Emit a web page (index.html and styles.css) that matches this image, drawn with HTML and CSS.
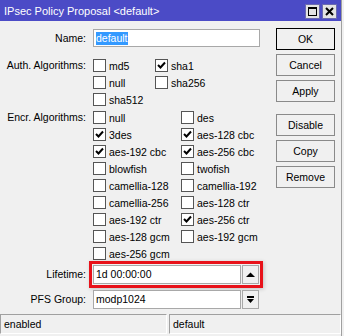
FILE: index.html
```html
<!DOCTYPE html>
<html>
<head>
<meta charset="utf-8">
<link rel="stylesheet" href="styles.css">
</head>
<body>
<div class="window">
  <div class="titlebar">
    <span class="title">IPsec Policy Proposal &lt;default&gt;</span>
    <div class="tb-btns">
      <span class="tb-btn"><svg width="13" height="13" viewBox="0 0 13 13"><rect x="2.5" y="2.5" width="8" height="8" fill="none" stroke="#000" stroke-width="1"/><rect x="2" y="2" width="9" height="2" fill="#000"/></svg></span>
      <span class="tb-btn"><svg width="13" height="13" viewBox="0 0 13 13"><path d="M3 3 L10 10 M10 3 L3 10" stroke="#000" stroke-width="2"/></svg></span>
    </div>
  </div>
  <div class="main">
    <div class="form">
      <div class="row row-name">
        <div class="label">Name:</div>
        <div class="input name-input"><span class="sel">default</span></div>
      </div>
      <div class="row row-auth">
        <div class="label">Auth. Algorithms:</div>
        <div class="checks auth">
          <label class="cb"><span class="box"></span>md5</label>
          <label class="cb"><span class="box on"><svg width="9" height="9" viewBox="0 0 9 9"><path d="M1 4 L3.5 6.5 L8 1.5" fill="none" stroke="#000" stroke-width="2"/></svg></span>sha1</label>
          <label class="cb"><span class="box"></span>null</label>
          <label class="cb"><span class="box"></span>sha256</label>
          <label class="cb"><span class="box"></span>sha512</label>
        </div>
      </div>
      <div class="row row-encr">
        <div class="label">Encr. Algorithms:</div>
        <div class="checks encr">
          <label class="cb"><span class="box"></span>null</label>
          <label class="cb"><span class="box"></span>des</label>
          <label class="cb"><span class="box on"><svg width="9" height="9" viewBox="0 0 9 9"><path d="M1 4 L3.5 6.5 L8 1.5" fill="none" stroke="#000" stroke-width="2"/></svg></span>3des</label>
          <label class="cb"><span class="box on"><svg width="9" height="9" viewBox="0 0 9 9"><path d="M1 4 L3.5 6.5 L8 1.5" fill="none" stroke="#000" stroke-width="2"/></svg></span>aes-128 cbc</label>
          <label class="cb"><span class="box on"><svg width="9" height="9" viewBox="0 0 9 9"><path d="M1 4 L3.5 6.5 L8 1.5" fill="none" stroke="#000" stroke-width="2"/></svg></span>aes-192 cbc</label>
          <label class="cb"><span class="box on"><svg width="9" height="9" viewBox="0 0 9 9"><path d="M1 4 L3.5 6.5 L8 1.5" fill="none" stroke="#000" stroke-width="2"/></svg></span>aes-256 cbc</label>
          <label class="cb"><span class="box"></span>blowfish</label>
          <label class="cb"><span class="box"></span>twofish</label>
          <label class="cb"><span class="box"></span>camellia-128</label>
          <label class="cb"><span class="box"></span>camellia-192</label>
          <label class="cb"><span class="box"></span>camellia-256</label>
          <label class="cb"><span class="box"></span>aes-128 ctr</label>
          <label class="cb"><span class="box"></span>aes-192 ctr</label>
          <label class="cb"><span class="box on"><svg width="9" height="9" viewBox="0 0 9 9"><path d="M1 4 L3.5 6.5 L8 1.5" fill="none" stroke="#000" stroke-width="2"/></svg></span>aes-256 ctr</label>
          <label class="cb"><span class="box"></span>aes-128 gcm</label>
          <label class="cb"><span class="box"></span>aes-192 gcm</label>
          <label class="cb"><span class="box"></span>aes-256 gcm</label>
        </div>
      </div>
      <div class="row row-life">
        <div class="label">Lifetime:</div>
        <div class="field highlight">
          <div class="input">1d 00:00:00</div>
          <div class="sq-btn"><svg width="9" height="6" viewBox="0 0 9 6"><path d="M0 5 L4.5 0.5 L9 5 Z" fill="#000"/></svg></div>
        </div>
      </div>
      <div class="row row-pfs">
        <div class="label">PFS Group:</div>
        <div class="field">
          <div class="input">modp1024</div>
          <div class="sq-btn"><svg width="9" height="8" viewBox="0 0 9 8"><rect x="1" y="0" width="7" height="2" fill="#000"/><path d="M1 3 L8 3 L4.5 7 Z" fill="#000"/></svg></div>
        </div>
      </div>
    </div>
    <div class="buttons">
      <div class="btn default">OK</div>
      <div class="btn">Cancel</div>
      <div class="btn">Apply</div>
      <div class="btn group">Disable</div>
      <div class="btn">Copy</div>
      <div class="btn">Remove</div>
    </div>
  </div>
  <div class="status">
    <div class="cell c1">enabled</div>
    <div class="cell c2">default</div>
  </div>
</div>
</body>
</html>
```
FILE: styles.css
```css
html, body {
  margin: 0;
  padding: 0;
  background: #f0f0f0;
}
body {
  width: 344px;
  height: 336px;
  overflow: hidden;
  font-family: "Liberation Sans", Arial, sans-serif;
  font-size: 10.5px;
  color: #000;
}
.window {
  width: 341px;
  height: 336px;
  border-right: 1px solid #a0a0a0;
  display: flex;
  flex-direction: column;
}
.titlebar {
  height: 21px;
  background: #4b4bc6;
  display: flex;
  align-items: center;
  justify-content: space-between;
  padding: 0 4px 0 4px;
}
.title {
  color: #fff;
  font-size: 11px;
}
.tb-btns {
  display: flex;
  gap: 2px;
  padding-top: 1px;
}
.tb-btn {
  width: 15px;
  height: 15px;
  box-sizing: border-box;
  background: #e3e3e3;
  border: 1px solid #6a6ab0;
  display: flex;
  align-items: center;
  justify-content: center;
}
.main {
  display: flex;
}
.form {
  width: 270px;
  padding-top: 8px;
}
.row {
  display: flex;
  align-items: flex-start;
}
.label {
  width: 86px;
  margin-right: 7px;
  text-align: right;
  line-height: 17px;
  flex: none;
}
.row-name .label, .row-life .label, .row-pfs .label {
  line-height: 19px;
}
.input {
  box-sizing: border-box;
  height: 19px;
  background: #fff;
  border: 1px solid #a8a8a8;
  padding: 0 2px;
  line-height: 17px;
  white-space: nowrap;
}
.name-input {
  width: 167px;
  height: 18px;
  line-height: 16px;
}
.sel {
  background: #3399ff;
  color: #fff;
  display: inline-block;
  line-height: 13px;
}
.row-auth { margin-top: 9px; }
.row-encr { margin-top: 1px; }
.row-life { margin-top: 3px; }
.row-pfs { margin-top: 6px; }
.checks {
  display: grid;
  grid-auto-rows: 17px;
}
.checks.auth { grid-template-columns: 62px 62px; }
.checks.encr { grid-template-columns: 88px 88px; }
.cb {
  display: flex;
  align-items: center;
  gap: 3px;
  white-space: nowrap;
}
.box {
  width: 13px;
  height: 13px;
  box-sizing: border-box;
  background: #fff;
  border: 1px solid #555;
  display: flex;
  align-items: center;
  justify-content: center;
  flex: none;
}
.field {
  display: flex;
  gap: 1px;
  width: 166px;
}
.field .input {
  flex: 1;
}
.highlight {
  box-shadow: 0 0 0 1px #f0f0f0, 0 0 0 4px #e8121a, 1px 1px 4px 4px rgba(0,0,0,0.2);
}
.sq-btn {
  width: 17px;
  height: 19px;
  box-sizing: border-box;
  border: 1px solid #a8a8a8;
  background: #f0f0f0;
  display: flex;
  align-items: center;
  justify-content: center;
}
.buttons {
  margin-left: 6px;
  padding-top: 7px;
  display: flex;
  flex-direction: column;
  gap: 4px;
}
.btn {
  width: 59px;
  height: 22px;
  box-sizing: border-box;
  border: 1px solid #8a8a8a;
  background: #f0f0f0;
  text-align: center;
  line-height: 20px;
}
.btn.default {
  border-color: #000;
}
.btn.group {
  margin-top: 8px;
}
.status {
  margin-top: auto;
  margin-bottom: 2px;
  display: flex;
  gap: 2px;
}
.cell {
  height: 20px;
  box-sizing: border-box;
  border-top: 1px solid #a0a0a0;
  border-left: 1px solid #a0a0a0;
  border-bottom: 1px solid #fff;
  border-right: 1px solid #fff;
  padding-left: 3px;
  line-height: 18px;
}
.c1 { width: 167px; }
.c2 { flex: 1; }
```
